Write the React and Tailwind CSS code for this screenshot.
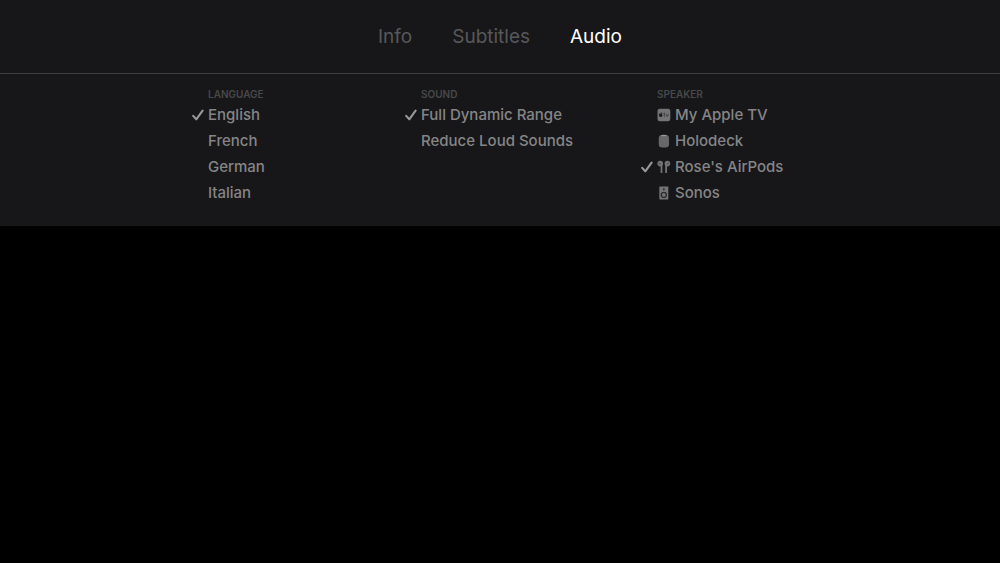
import { useState } from "react";

const tabs = ["Info", "Subtitles", "Audio"];

const groups = [
  {
    name: "Language",
    selected: "English",
    options: [
      { label: "English" },
      { label: "French" },
      { label: "German" },
      { label: "Italian" },
    ],
  },
  {
    name: "Sound",
    selected: "Full Dynamic Range",
    options: [{ label: "Full Dynamic Range" }, { label: "Reduce Loud Sounds" }],
  },
  {
    name: "Speaker",
    selected: "Rose's AirPods",
    options: [
      { label: "My Apple TV", icon: AppleTvIcon },
      { label: "Holodeck", icon: HomePodIcon },
      { label: "Rose's AirPods", icon: AirPodsIcon },
      { label: "Sonos", icon: SpeakerIcon },
    ],
  },
];

function CheckIcon() {
  return (
    <svg viewBox="0 0 12 12" className="size-3" fill="none" aria-hidden="true">
      <path
        d="M1.2 6.9 4.3 10.3 10.6 1.7"
        stroke="#98989a"
        strokeWidth="2.1"
        strokeLinecap="round"
        strokeLinejoin="round"
      />
    </svg>
  );
}

function AppleTvIcon() {
  return (
    <svg viewBox="0 0 14 14" className="size-3.5" aria-hidden="true">
      <rect x="0.5" y="0.7" width="12.8" height="12.6" rx="2.4" fill="#747476" />
      {/* apple */}
      <path
        d="M4 5.5c.4-.2 1-.3 1.4.1-.6.5-.5 1.5.2 1.9-.3.9-.8 1.5-1.3 1.4-.3-.1-.5-.1-.8 0C2.7 9.1 1.9 7.8 1.9 6.9c0-1.2.9-1.7 1.6-1.4z"
        fill="#1d1d1f"
      />
      <path d="M3.7 5.2c0-.6.4-1 .9-1.1 0 .6-.4 1.1-.9 1.1z" fill="#1d1d1f" />
      {/* tv */}
      <path
        d="M7.3 4.7V8.2c0 .5.3.7.9.6M6.5 5.9H8.3M9.1 5.9 10.3 8.7 11.5 5.9"
        fill="none"
        stroke="#3a3a3c"
        strokeWidth="0.8"
      />
    </svg>
  );
}

function HomePodIcon() {
  return (
    <svg viewBox="0 0 14 14" className="size-3.5" aria-hidden="true">
      <rect x="1.8" y="1" width="10.2" height="12.4" rx="3.2" fill="#68686a" />
      <ellipse cx="6.9" cy="1.5" rx="3" ry="0.7" fill="#98989a" />
    </svg>
  );
}

function AirPodsIcon() {
  return (
    <svg viewBox="0 0 14 14" className="size-3.5" aria-hidden="true">
      <g fill="#747476">
        <circle cx="3.2" cy="3.6" r="2.8" />
        <circle cx="10.4" cy="3.6" r="2.8" />
        <rect x="3.6" y="3.6" width="1.8" height="9.4" rx="0.6" />
        <rect x="8.2" y="3.6" width="1.8" height="9.4" rx="0.6" />
      </g>
      <path
        d="M2.1 3.2 3.3 3.8M11.5 3.2 10.3 3.8"
        stroke="#3a3a3c"
        strokeWidth="0.8"
        strokeLinecap="round"
      />
    </svg>
  );
}

function SpeakerIcon() {
  return (
    <svg viewBox="0 0 14 14" className="size-3.5" aria-hidden="true">
      <rect x="2.3" y="0.5" width="9" height="13" rx="0.8" fill="#747476" />
      <circle cx="6.8" cy="3.2" r="1" fill="#2c2c2e" />
      <circle cx="6.8" cy="8.9" r="2.5" fill="none" stroke="#2c2c2e" strokeWidth="1.3" />
    </svg>
  );
}

function OptionGroup({ group }) {
  const [selected, setSelected] = useState(group.selected);

  return (
    <fieldset>
      <legend className="pl-4 text-[10px] leading-4 font-semibold text-[#48484a] uppercase">
        {group.name}
      </legend>
      {group.options.map(({ label, icon: Icon }) => (
        <label
          key={label}
          className="relative flex h-[26px] cursor-pointer items-center text-[15px] font-medium whitespace-nowrap text-[#858587]"
        >
          <input
            type="radio"
            name={group.name}
            checked={selected === label}
            onChange={() => setSelected(label)}
            className="sr-only"
          />
          <span className="w-4 shrink-0">{selected === label && <CheckIcon />}</span>
          {Icon && (
            <span className="mr-1 shrink-0">
              <Icon />
            </span>
          )}
          {label}
        </label>
      ))}
    </fieldset>
  );
}

export default function App() {
  const [activeTab, setActiveTab] = useState("Audio");

  return (
    <div className="min-h-screen bg-black font-['Inter',sans-serif]">
      <div className="bg-[#171719] pb-5">
        <nav className="flex h-[74px] items-center justify-center gap-10 border-b border-[#414143] pt-0.5">
          {tabs.map((tab) => (
            <button
              key={tab}
              onClick={() => setActiveTab(tab)}
              className={`cursor-pointer text-[19px] ${
                activeTab === tab ? "text-white" : "text-[#58585a]"
              }`}
            >
              {tab}
            </button>
          ))}
        </nav>
        <div className="grid grid-cols-[213px_236px_167px] justify-center pt-3">
          {groups.map((group) => (
            <OptionGroup key={group.name} group={group} />
          ))}
        </div>
      </div>
    </div>
  );
}
